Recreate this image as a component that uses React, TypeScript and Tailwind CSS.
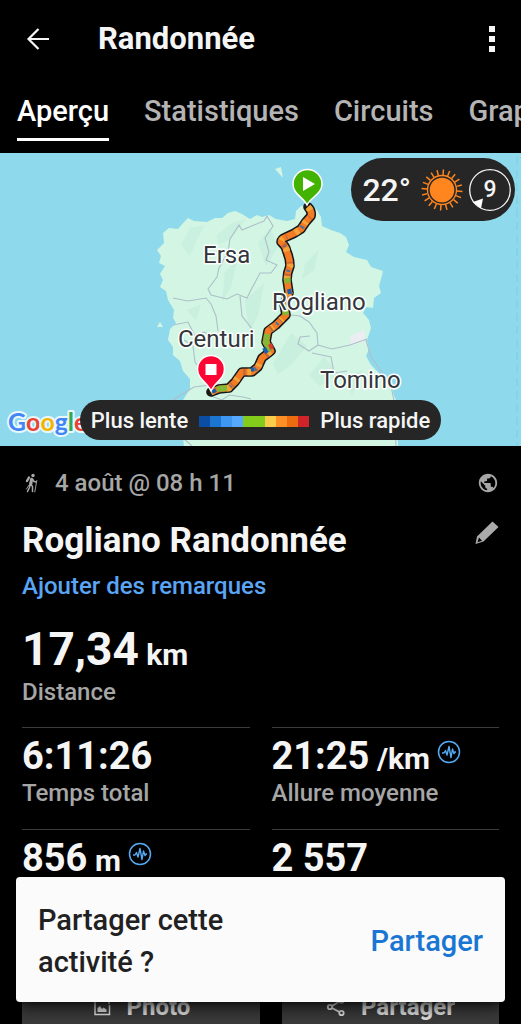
import type { ReactNode } from "react";
import { MdPublic } from "react-icons/md";

const COAST =
  "M184 293 L183 285 L186 262 L183 247 L190 236 L190 226 L183 218 L180 208 L173 202 L173 194 L168 187 L170 176 L176 170 L173 165 L174 157 L168 147 L166 138 L160 134 L163 127 L160 121 L165 113 L159 110 L161 103 L157 97 L164 90 L163 80 L169 75 L178 76 L184 69 L188 65 L194 68 L207 69 L215 65 L222 65 L228 60 L235 58 L242 61 L250 66 L257 62 L262 64 L269 62 L276 66 L287 68 L295 66 L296 58 L301 53 L310 52 L317 57 L321 64 L322 73 L331 77 L340 80 L346 84 L349 92 L346 99 L354 104 L367 107 L371 114 L383 118 L381 126 L379 133 L381 140 L374 145 L373 155 L366 154 L363 160 L369 167 L371 175 L367 187 L369 196 L366 203 L371 212 L377 218 L384 225 L392 235 L394 243 L397 249 L398 293 Z";

const ROUTE =
  "M308 54 Q312 58 311 63 Q305 69 301 76 Q294 81 286 84 Q281 86 281 89 Q286 93 287 99 Q290 106 290 113 Q287 120 287 127 L289 140 L284 151 L286 162 L276 172 L268 178 L266 189 L271 198 L262 205 L258 214 L252 219 L242 219 L235 229 L229 235 L219 236 L211 239";

const COLORS = ["#0a4da2", "#1b76d2", "#3f97f4", "#55aaff", "#83cc1c", "#83cc1c", "#f9cc4c", "#fd8f27", "#ed6c10", "#d12428"];

function MapDrawing() {
  return (
    <svg viewBox="0 0 521 293" preserveAspectRatio="xMidYMid slice" className="block h-[293px] w-full bg-[#8fd9ec]" role="img" aria-label="Carte">
      <path d={COAST} fill="#d2f6e3" />
      <path d="M275 16 L281 14 L283 25 Z M157 174 L160 169 L163 174 Z" fill="#d2f6e3" />
      <g fill="#c2eadb" opacity="0.5">
        <path d="M190 75 L205 72 L196 88 L190 103 L181 92 Z M217 82 L232 70 L246 66 L231 86 L218 91 Z" />
        <path d="M258 90 L270 75 L278 94 L266 113 Z M305 111 L319 96 L314 117 L302 126 Z" />
        <path d="M225 119 L238 105 L231 134 L222 149 Z M245 147 L264 130 L258 163 L249 179 Z" />
        <path d="M273 211 L291 180 L307 193 L291 212 L278 221 Z M309 222 L324 204 L339 221 L320 233 Z M345 225 L363 217 L352 242 Z M187 157 L201 151 L196 168 Z M194 183 L210 176 L198 195 Z" />
      </g>
      <path d="M350 183 L364 177 L365 188 L351 193 Z" fill="#ebedf2" />
      <path d="M517 4 V293" stroke="#7fcbdf" strokeWidth="1" strokeDasharray="8 5" />
      <g fill="none" stroke="#aebfca" strokeWidth="1.1">
        <path d="M267 63 L273 73 L265 85 L269 99 L266 107 L277 112 L271 120 L260 120 L251 137 L247 145 L237 141 L227 146 L211 142 L208 136 L217 124 L219 115 L228 99 L230 86 L239 72 L242 77 L254 72 L264 68 Z" />
        <path d="M173 145 L188 148 L206 145 L211 151 L216 163 L218 178 M173 172 L188 169 L195 183 L204 179 L213 184 M184 187 L193 193 L195 209 L200 216 M173 247 L194 234 L210 232 M240 143 L242 163 L253 177" />
        <path d="M282 161 L300 163 L309 169 L317 180 L318 192 L332 196 L350 192 L367 186 M318 192 L309 198 L298 191 L300 184 L310 183 M312 200 L331 204 L334 220 L347 218 M366 187 L371 204 L381 218 L391 233 L394 248 L396 293 M211 243 L222 247 L229 242 L243 244 L251 246 M184 286 L192 293" />
      </g>
      <path d={ROUTE} fill="none" stroke="#15191c" strokeWidth="9.600" strokeLinejoin="round" strokeLinecap="round" />
      <path d={ROUTE} fill="none" stroke="#f27b24" strokeWidth="6.600" strokeLinejoin="round" />
      <path d={ROUTE} fill="none" stroke="#f5a43a" strokeWidth="6.600" strokeDasharray="4 13 3 9" />
      <path d={ROUTE} fill="none" stroke="#be6438" strokeWidth="6.600" strokeDasharray="2 17 1 11" strokeDashoffset="8" />
      <path d={ROUTE} fill="none" stroke="#4b73a0" strokeWidth="4" strokeDasharray="1 24 2 31" strokeDashoffset="2" />
      <path d="M284 151 L286 162 M267 181 L266 189 L270 198 M227 235 L217 236 M287 125 L288 130" fill="none" stroke="#82b833" strokeWidth="6" />
      <path d="M264 195 L267 200 M212 239 L216 237 M289 136 L290 141 M251 217 L254 216" fill="none" stroke="#1c5ca8" strokeWidth="4" />
      <path d="M270 191 L272 196" stroke="#dc392b" strokeWidth="4" />
      <g fontFamily="Roboto, sans-serif" fontSize="24" fill="#33373c" stroke="#fff" strokeWidth="3" strokeLinejoin="round" paintOrder="stroke">
        <text x="203" y="110">Ersa</text>
        <text x="272" y="157">Rogliano</text>
        <text x="178" y="194">Centuri</text>
        <text x="320" y="235">Tomino</text>
      </g>
      <path d="M307 52 C303 44 293 41 293 31 A14.500 14.500 0 0 1 322 31 C322 41 311 44 307 52 Z" fill="#43b302" stroke="#fff" strokeWidth="1.500" />
      <path d="M303 24 L315 31 L303 38 Z" fill="#fff" />
      <path d="M211 238 C207 229 197.500 226 197.500 216 A13.500 13.500 0 0 1 224.500 216 C224.500 226 215 229 211 238 Z" fill="#fc0734" stroke="#fff" strokeWidth="1.500" />
      <rect x="205.500" y="211" width="11" height="11" fill="#fff" />
      <text x="8" y="278" fontFamily="Lato, sans-serif" fontSize="25" fontWeight="700" stroke="#e8f8fc" strokeWidth="4" strokeLinejoin="round" paintOrder="stroke">
        <tspan fill="#4285f4">G</tspan>
        <tspan fill="#ea4335">o</tspan>
        <tspan fill="#f4b400">o</tspan>
        <tspan fill="#4285f4">g</tspan>
        <tspan fill="#34a853">l</tspan>
        <tspan fill="#ea4335">e</tspan>
      </text>
    </svg>
  );
}

function Sun() {
  return (
    <svg viewBox="-21 -21 42 42" className="size-[42px]" aria-hidden="true">
      <circle r="12.300" fill="#ff861f" />
      <circle r="14.500" fill="none" stroke="#ff861f" strokeWidth="1.300" />
      {Array.from({ length: 20 }, (_, i) => (
        <path key={i} d="M0 -15 V-20.500" stroke="#ff861f" strokeWidth="1.500" transform={`rotate(${i * 18 + 4})`} />
      ))}
    </svg>
  );
}

function Wind() {
  return (
    <div className="relative flex size-[42px] items-center justify-center">
      <svg viewBox="-21 -21 42 42" className="absolute inset-0" aria-hidden="true">
        <circle r="20.300" fill="none" stroke="#f5f5f5" strokeWidth="1.300" />
        <path d="M-17 12 L-7 8.500 L-9 18.500 Z" fill="#fff" />
      </svg>
      <span className="text-[23px] leading-none font-medium">9</span>
    </div>
  );
}

function Hiker() {
  return (
    <svg viewBox="0 0 14 20" className="h-5 w-3.5" fill="none" stroke="#aaa" strokeWidth="1.500" strokeLinecap="round" strokeLinejoin="round" aria-hidden="true">
      <circle cx="8" cy="2.500" r="1.700" fill="#aaa" stroke="none" />
      <path d="M4 4.500 L2 8" strokeWidth="2.400" />
      <path d="M6.500 5.500 L5 10.500 L7.500 13.500 L7.500 18.500 M5 11 L4.500 14.500 L2.500 18.500 M7.500 6 L9 8.500 L11 9" />
      <path d="M6.500 6.500 L6 10.500" strokeWidth="3" />
      <path d="M11.800 7.500 L9.800 19 M4 12 L1.500 16" strokeWidth="0.900" />
    </svg>
  );
}

function Pulse() {
  return (
    <svg viewBox="0 0 24 24" className="mt-1 size-6 shrink-0" fill="none" stroke="#55aaf5" aria-hidden="true">
      <circle cx="12" cy="12" r="10.500" strokeWidth="1.500" />
      <path d="M5 13 H7 L8.500 10.500 L10 15 L12 6.500 L14 17.500 L15.500 9 L17 13.500 L18 12 H19" strokeWidth="1.400" strokeLinejoin="round" />
    </svg>
  );
}

type StatProps = { value: string; unit?: string; label?: string; pulse?: boolean };

function Stat({ value, unit, label, pulse }: StatProps) {
  return (
    <div className="h-[102px] border-t border-[#3c3c3c] pt-2">
      <div className="flex h-10 gap-[7px]">
        <p className="text-[38px] leading-10 font-bold">
          {value}
          {unit && <span className="text-[30px] leading-none"> {unit}</span>}
        </p>
        {pulse && <Pulse />}
      </div>
      {label && <p className="text-[24px] leading-[34px] font-medium text-[#a6a6a6]">{label}</p>}
    </div>
  );
}

function ActionButton({ icon, children }: { icon: ReactNode; children: ReactNode }) {
  return (
    <button className="flex h-16 items-center justify-center gap-[15px] bg-[#3a3a3a] text-[24px] font-bold text-[#e2e2e2]">
      {icon}
      {children}
    </button>
  );
}

export default function App() {
  return (
    <main className="relative h-screen overflow-hidden bg-black font-['Roboto',sans-serif] text-[#f5f5f5]">
      <header className="flex h-[76px] items-center pt-0.5 pr-[18px] pl-[26px]">
        <button aria-label="Retour" className="mr-12">
          <svg viewBox="0 0 24 24" className="size-6" fill="none" stroke="#f5f5f5" strokeWidth="2.200" aria-hidden="true">
            <path d="M12.500 2 L2.500 12 L12.500 22 M2.500 12 H23" />
          </svg>
        </button>
        <h1 className="flex-1 text-[31px] leading-9 font-bold">Randonnée</h1>
        <button aria-label="Plus d’options" className="px-2">
          <svg viewBox="0 0 6 26" className="h-[26px] w-1.5" fill="#f5f5f5" aria-hidden="true">
            <path d="M0 0h6v6H0zM0 10h6v6H0zM0 20h6v6H0z" />
          </svg>
        </button>
      </header>
      <nav className="flex h-[77px] items-start gap-[35px] overflow-hidden px-[17px] pt-[17px] text-[29px] leading-9 font-medium whitespace-nowrap text-[#b4b4b4]">
        <a href="#apercu" aria-current="page" className="h-12 border-b-3 border-white text-white">Aperçu</a>
        <a href="#statistiques">Statistiques</a>
        <a href="#circuits">Circuits</a>
        <a href="#graphiques">Graphiques</a>
      </nav>

      <section className="relative">
        <MapDrawing />
        <div className="absolute top-[5px] right-1.5 flex h-[63px] items-center rounded-full bg-[#262626] pr-1 pl-[11px]">
          <span className="mr-2.5 text-[32px] leading-none font-medium">22°</span>
          <Sun />
          <span className="ml-1.5"><Wind /></span>
        </div>
        <div className="absolute inset-x-0 bottom-1.5 flex justify-center">
          <div className="flex h-10 items-center gap-[11px] rounded-full bg-[#262626] px-[11px] pt-0.5 text-[22px] leading-none font-medium whitespace-nowrap">
            Plus lente
            <span className="flex">
              {COLORS.map((c, i) => (
                <i key={i} className="h-[11px] w-[11px]" style={{ backgroundColor: c }} />
              ))}
            </span>
            Plus rapide
          </div>
        </div>
      </section>

      <section className="px-[22px] pt-[21px]">
        <div className="flex h-8 items-center pl-[3px] text-[#a6a6a6]">
          <Hiker />
          <p className="ml-4 flex-1 text-[24px] leading-8 font-medium">4 août @ 08 h 11</p>
          <MdPublic className="size-[22px]" />
        </div>
        <div className="mt-5 flex h-11 items-start justify-between">
          <h2 className="text-[35px] leading-11 font-bold">Rogliano Randonnée</h2>
          <button aria-label="Modifier" className="mt-0.5">
            <svg viewBox="0 0 24 24" className="size-6" aria-hidden="true">
              <path fillRule="evenodd" fill="#aaa" d="M17.500 .5 L23.500 6 L8.500 20.500 L.5 23 L2 15.500 Z M4 16.500 L2.500 21.200 L7 19.700 Z" />
            </svg>
          </button>
        </div>
        <a href="#remarques" className="mt-[7px] block text-[24px] leading-8 font-medium text-[#5aa5f5]">Ajouter des remarques</a>
        <div className="mt-5 h-[105px]">
          <p className="h-[54px] text-[46px] leading-[54px] font-bold">
            17,34<span className="text-[30px] leading-none"> km</span>
          </p>
          <p className="text-[24px] leading-8 font-medium text-[#a6a6a6]">Distance</p>
        </div>
        <div className="grid grid-cols-2 gap-x-[22px]">
          <Stat value="6:11:26" label="Temps total" />
          <Stat value="21:25" unit="/km" label="Allure moyenne" pulse />
          <Stat value="856" unit="m" pulse />
          <Stat value="2 557" />
        </div>
        <div className="mt-11 grid grid-cols-[238fr_217fr] gap-[22px]">
          <ActionButton
            icon={
              <svg viewBox="0 0 20 20" className="size-5" fill="none" stroke="#e2e2e2" strokeWidth="1.500" aria-hidden="true">
                <path d="M12 3 H3 V17.500 H17.500 V8" />
                <path d="M5.500 15 V11 L8 9 L10 12 L11.500 10.500 L14.500 12.500 V15 Z" fill="#e2e2e2" stroke="none" />
                <path d="M17 1 V7 M14 4 H20" />
              </svg>
            }
          >
            Photo
          </ActionButton>
          <ActionButton
            icon={
              <svg viewBox="0 0 20 20" className="size-5" fill="none" stroke="#e2e2e2" strokeWidth="1.800" aria-hidden="true">
                <circle cx="4" cy="10" r="2.200" />
                <circle cx="15.500" cy="3.500" r="2.200" />
                <circle cx="15.500" cy="16" r="2.200" />
                <path d="M6 9 L13.500 4.500 M6 11 L13.500 15" />
              </svg>
            }
          >
            Partager
          </ActionButton>
        </div>
      </section>

      <aside className="absolute inset-x-4 bottom-[22px] flex h-[125px] items-center justify-between rounded bg-[#fbfbfb] px-[22px] pt-0.5 text-[29px] font-medium shadow-lg shadow-black/60">
        <p className="w-60 leading-[42px] text-[#212121]">Partager cette activité ?</p>
        <button className="leading-[42px] text-[#1976d2]">Partager</button>
      </aside>
    </main>
  );
}
